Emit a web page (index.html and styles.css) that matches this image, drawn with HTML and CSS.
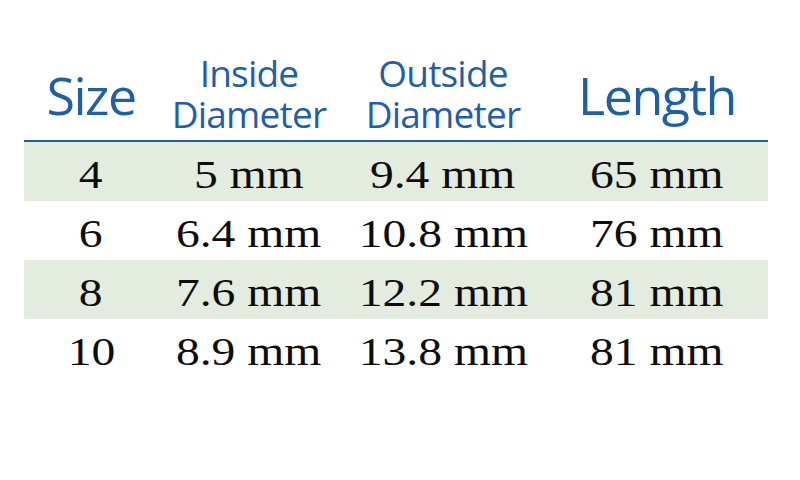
FILE: index.html
```html
<!DOCTYPE html>
<html lang="en">
<head>
    <meta charset="UTF-8">
    <meta name="viewport" content="width=device-width, initial-scale=1.0">
    <title>Sizes</title>
    <link rel="stylesheet" href="styles.css">
</head>
<body>
    <div class="page">
        <div class="size-table">
            <div class="head-row">
                <div class="head big">Size</div>
                <div class="head small">Inside<br>Diameter</div>
                <div class="head small">Outside<br>Diameter</div>
                <div class="head big">Length</div>
            </div>
            <div class="row shade">
                <div class="cell"><span>4</span></div>
                <div class="cell"><span>5 mm</span></div>
                <div class="cell"><span>9.4 mm</span></div>
                <div class="cell"><span>65 mm</span></div>
            </div>
            <div class="row">
                <div class="cell"><span>6</span></div>
                <div class="cell"><span>6.4 mm</span></div>
                <div class="cell"><span>10.8 mm</span></div>
                <div class="cell"><span>76 mm</span></div>
            </div>
            <div class="row shade">
                <div class="cell"><span>8</span></div>
                <div class="cell"><span>7.6 mm</span></div>
                <div class="cell"><span>12.2 mm</span></div>
                <div class="cell"><span>81 mm</span></div>
            </div>
            <div class="row">
                <div class="cell"><span>10</span></div>
                <div class="cell"><span>8.9 mm</span></div>
                <div class="cell"><span>13.8 mm</span></div>
                <div class="cell"><span>81 mm</span></div>
            </div>
        </div>
    </div>
</body>
</html>
```

FILE: styles.css
```css
body {
    margin: 0;
    padding: 0;
    background-color: #ffffff;
}
.page {
    padding: 40px 32px 0 24px;
}
.size-table {
    width: 744px;
}
.head-row,
.row {
    display: grid;
    grid-template-columns: 134px 182px 206px 222px;
}
.head-row {
    height: 100px;
    border-bottom: 2px solid #1f5fa8;
}
.head {
    display: flex;
    flex-direction: column;
    justify-content: flex-end;
    align-items: center;
    text-align: center;
    color: #1f5fa8;
    font-family: "Open Sans", sans-serif;
}
.big {
    font-size: 52px;
    line-height: 52px;
    letter-spacing: -1.5px;
    padding-bottom: 19px;
}
.small {
    font-size: 37px;
    line-height: 41px;
    letter-spacing: -0.8px;
    padding-bottom: 6px;
}
.row {
    height: 59px;
}
.shade {
    background-color: #e4ebdf;
}
.cell {
    display: flex;
    align-items: center;
    justify-content: center;
    padding-top: 6px;
    font-family: "Liberation Serif", "Times New Roman", serif;
    font-size: 39px;
    color: #0d0d0d;
}
.cell span {
    display: inline-block;
    transform: scaleX(1.22); /* reference type runs wide */
}
```
